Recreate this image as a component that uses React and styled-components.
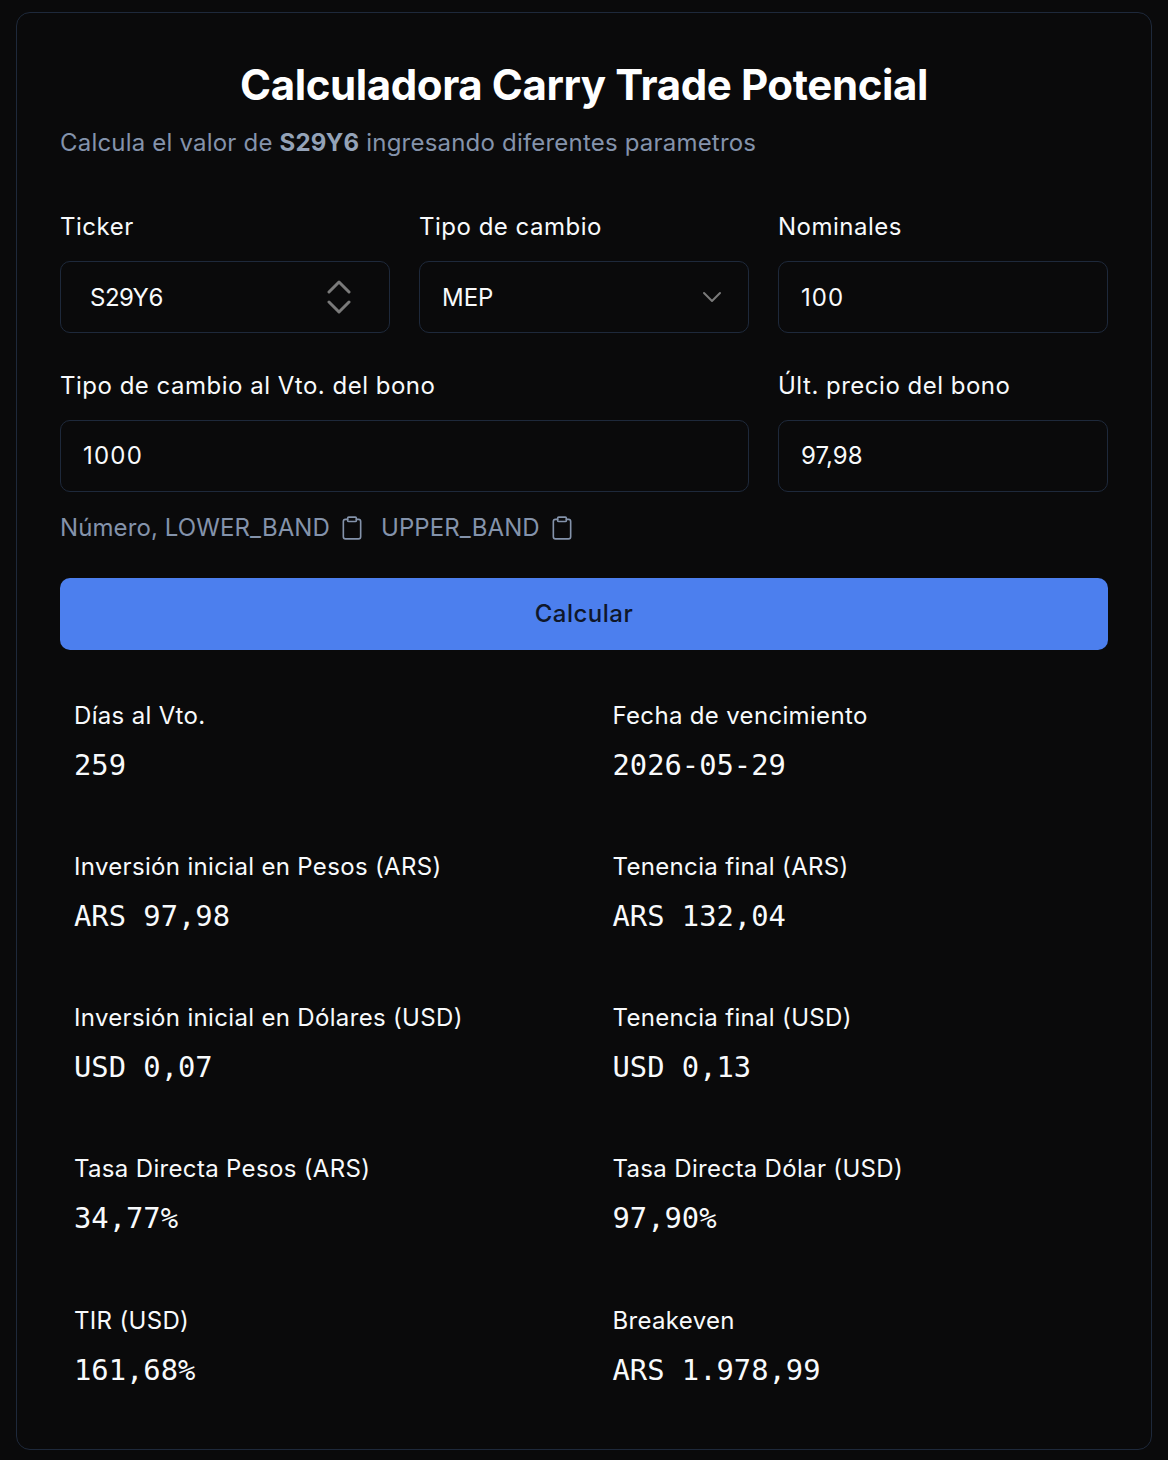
import React from 'react'
import styled, { createGlobalStyle } from 'styled-components'
import { ChevronDown, Clipboard } from 'lucide-react'

const GlobalStyle = createGlobalStyle`
  html, body {
    margin: 0;
    background: #0a0a0b;
    font-family: "Inter", "Liberation Sans", sans-serif;
  }
  * { box-sizing: border-box; }
`

const Page = styled.div`
  padding: 12px 16px 10px;
`

const Card = styled.div`
  height: 1438px;
  border: 1px solid #1e293b;
  border-radius: 14px;
  padding: 43px 43px 0;
  background: #0a0a0b;
`

const Title = styled.h1`
  margin: 0;
  height: 60px;
  line-height: 58px;
  text-align: center;
  font-size: 42px;
  font-weight: 700;
  letter-spacing: -0.4px;
  color: #fff;
`

const Subtitle = styled.p`
  margin: 9px 0 0;
  height: 36px;
  line-height: 36px;
  font-size: 24px;
  letter-spacing: 0.2px;
  color: #8493ab;
  b { font-weight: 700; color: #94a3b8; }
`

const FormGrid = styled.div`
  margin-top: 46px;
  display: grid;
  grid-template-columns: repeat(3, 1fr);
  column-gap: 29px;
  row-gap: 32.5px;
`

const Field = styled.div`
  grid-column: span ${p => p.$span || 1};
  min-width: 0;
`

const Label = styled.div`
  height: 40px;
  line-height: 40px;
  font-size: 24px;
  font-weight: 400;
  letter-spacing: 0.5px;
  color: #f8fafc;
`

const Control = styled.div`
  margin-top: 14px;
  height: 72px;
  display: flex;
  align-items: center;
  justify-content: space-between;
  border: 1px solid #1e293b;
  border-radius: 10px;
  padding: 0 ${p => p.$pr || 22}px 0 ${p => p.$pl || 22}px;
  font-size: 24px;
  letter-spacing: ${p => p.$ls || 0}px;
  color: #f8fafc;
`

const Hints = styled.div`
  margin-top: 16px;
  height: 40px;
  display: flex;
  align-items: center;
  font-size: 24px;
  letter-spacing: 0.1px;
  color: #8493ab;
`

const Hint = styled.span`
  display: inline-flex;
  align-items: center;
  gap: 9px;
  margin-right: 16px;
`

const SubmitButton = styled.button`
  display: block;
  width: 100%;
  height: 72px;
  margin-top: 30px;
  border: 0;
  border-radius: 10px;
  background: #4c7fee;
  color: #0f172a;
  font-family: inherit;
  font-size: 24px;
  font-weight: 500;
  letter-spacing: 0.5px;
`

const Results = styled.div`
  margin-top: 46px;
  display: grid;
  grid-template-columns: 1fr 1fr;
  column-gap: 29px;
`

const Stat = styled.div`
  height: 151.25px;
  padding: 0 14px;
`

const StatLabel = styled.div`
  height: 40px;
  line-height: 40px;
  font-size: 24px;
  font-weight: 400;
  letter-spacing: 0.33px;
  color: #f8fafc;
`

const StatValue = styled.div`
  margin-top: 7px;
  height: 44px;
  line-height: 44px;
  font-family: "DejaVu Sans Mono", monospace;
  font-size: 28.8px;
  color: #f8fafc;
`

const UpDown = () => (
  <svg width="24" height="36" viewBox="0 0 24 36" fill="none" stroke="#7a7a7a" strokeWidth="3" strokeLinecap="round" strokeLinejoin="round">
    <path d="M2 13 12 3l10 10" />
    <path d="M2 23l10 10 10-10" />
  </svg>
)

const stats = [
  ['Días al Vto.', '259'],
  ['Fecha de vencimiento', '2026-05-29'],
  ['Inversión inicial en Pesos (ARS)', 'ARS 97,98'],
  ['Tenencia final (ARS)', 'ARS 132,04'],
  ['Inversión inicial en Dólares (USD)', 'USD 0,07'],
  ['Tenencia final (USD)', 'USD 0,13'],
  ['Tasa Directa Pesos (ARS)', '34,77%'],
  ['Tasa Directa Dólar (USD)', '97,90%'],
  ['TIR (USD)', '161,68%'],
  ['Breakeven', 'ARS 1.978,99'],
]

export default function App() {
  return (
    <>
      <GlobalStyle />
      <Page>
        <Card>
          <Title>Calculadora Carry Trade Potencial</Title>
          <Subtitle>Calcula el valor de <b>S29Y6</b> ingresando diferentes parametros</Subtitle>

          <FormGrid>
            <Field>
              <Label>Ticker</Label>
              <Control $pl={29} $pr={38} $ls={-0.5}>
                S29Y6
                <UpDown />
              </Control>
            </Field>
            <Field>
              <Label>Tipo de cambio</Label>
              <Control $pr={20}>
                MEP
                <ChevronDown size={32} color="#7a7a7a" strokeWidth={1.5} />
              </Control>
            </Field>
            <Field>
              <Label>Nominales</Label>
              <Control $ls={1}>100</Control>
            </Field>
            <Field $span={2}>
              <Label>Tipo de cambio al Vto. del bono</Label>
              <Control $ls={1.2}>1000</Control>
            </Field>
            <Field>
              <Label>Últ. precio del bono</Label>
              <Control>97,98</Control>
            </Field>
          </FormGrid>

          <Hints>
            <Hint>Número, LOWER_BAND <Clipboard size={26} strokeWidth={1.5} /></Hint>
            <Hint>UPPER_BAND <Clipboard size={26} strokeWidth={1.5} /></Hint>
          </Hints>

          <SubmitButton>Calcular</SubmitButton>

          <Results>
            {stats.map(([label, value]) => (
              <Stat key={label}>
                <StatLabel>{label}</StatLabel>
                <StatValue>{value}</StatValue>
              </Stat>
            ))}
          </Results>
        </Card>
      </Page>
    </>
  )
}
